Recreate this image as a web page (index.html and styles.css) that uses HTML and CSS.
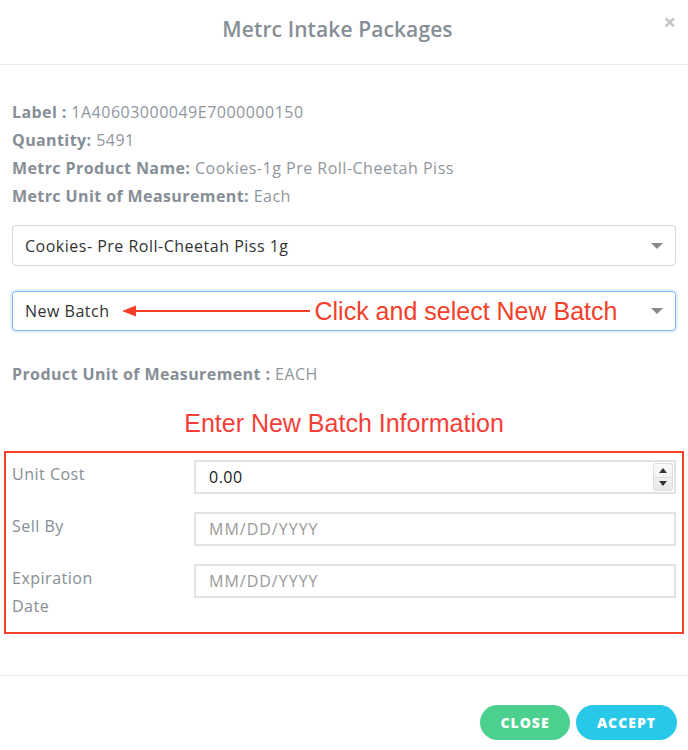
FILE: index.html
```html
<!DOCTYPE html>
<html>
<head>
<meta charset="utf-8">
<link rel="stylesheet" href="styles.css">
</head>
<body>
<div class="modal">
  <div class="modal-header">
    <h2 class="title">Metrc Intake Packages</h2>
    <span class="close-x">×</span>
  </div>
  <div class="modal-body">
    <div class="info">
      <div class="line"><b>Label :</b> 1A40603000049E7000000150</div>
      <div class="line"><b>Quantity:</b> 5491</div>
      <div class="line"><b>Metrc Product Name:</b> Cookies-1g Pre Roll-Cheetah Piss</div>
      <div class="line"><b>Metrc Unit of Measurement:</b> Each</div>
    </div>
    <div class="select">
      <span>Cookies- Pre Roll-Cheetah Piss 1g</span>
      <span class="caret"></span>
    </div>
    <div class="select focused">
      <span>New Batch</span>
      <span class="annot">
        <svg class="arrow" width="188" height="12" viewBox="0 0 188 12"><line x1="8" y1="6" x2="188" y2="6" stroke="#f4402a" stroke-width="2.2"/><polygon points="0,6 14,0.5 14,11.5" fill="#f4402a"/></svg>
        <span class="annot-text">Click and select New Batch</span>
      </span>
      <span class="caret"></span>
    </div>
    <div class="line unit"><b>Product Unit of Measurement :</b> EACH</div>
    <div class="enter">Enter New Batch Information</div>
    <div class="redbox">
      <div class="row">
        <label>Unit Cost</label>
        <div class="input num"><span class="val">0.00</span>
          <span class="spin"><span class="up"></span><span class="dn"></span></span>
        </div>
      </div>
      <div class="row">
        <label>Sell By</label>
        <div class="input"><span class="ph">MM/DD/YYYY</span></div>
      </div>
      <div class="row">
        <label>Expiration<br>Date</label>
        <div class="input"><span class="ph">MM/DD/YYYY</span></div>
      </div>
    </div>
  </div>
  <div class="modal-footer">
    <button class="btn btn-close">CLOSE</button>
    <button class="btn btn-accept">ACCEPT</button>
  </div>
</div>
</body>
</html>
```

FILE: styles.css
```css
* { box-sizing: border-box; }
html, body { margin: 0; padding: 0; background: #fff; }
body { width: 688px; height: 750px; overflow: hidden; font-family: "Open Sans", "Noto Sans", sans-serif; color: #868e96; }

.modal { width: 688px; }
.modal-header { height: 65px; border-bottom: 1px solid #e9ecef; display: flex; align-items: center; justify-content: center; position: relative; padding-right: 13px; }
.title { margin: 0; font-size: 21px; font-weight: 600; color: #868e96; letter-spacing: 0.1px; padding-bottom: 7px; }
.close-x { position: absolute; right: 12px; top: 6px; font-size: 22px; color: #c4c4c4; font-weight: 700; }

.modal-body { padding: 33px 12px 0 12px; }
.line { font-size: 16px; letter-spacing: 0.5px; line-height: 28px; color: #8f969c; white-space: nowrap; }
.line b { font-weight: 700; color: #868e96; letter-spacing: 0.4px; }
.info { margin-bottom: 15px; }

.select { height: 41px; border: 1px solid #d3d6d8; border-radius: 4px; display: flex; align-items: center; padding: 0 12px; font-size: 16px; letter-spacing: 0.5px; color: #333; position: relative; margin-bottom: 25px; }
.select.focused { border-color: #7fb6f0; box-shadow: 0 0 0 2px #e6f1fd; margin-bottom: 29px; height: 40px; }
.caret { position: absolute; right: 12px; top: 50%; margin-top: -3px; width: 0; height: 0; border-left: 6px solid transparent; border-right: 6px solid transparent; border-top: 6px solid #888; }
.annot { display: flex; align-items: center; margin-left: 12px; letter-spacing: 0; }
.arrow { display: block; }
.annot-text { font-family: "Liberation Sans", Arial, sans-serif; font-size: 25px; color: #f4402a; margin-left: 5px; }

.unit { margin-bottom: 21px; }
.enter { text-align: center; font-family: "Liberation Sans", Arial, sans-serif; font-size: 25px; color: #f63e38; line-height: 28px; margin-bottom: 14px; }

.redbox { margin: 0 -8px; border: 2px solid #f8412a; padding: 7px 6px 12px 6px; display: flex; flex-direction: column; gap: 18px; }
.row { display: flex; align-items: flex-start; }
.row label { width: 182px; font-size: 16px; letter-spacing: 0.5px; line-height: 28px; color: #868e96; flex-shrink: 0; }
.input { flex: 1; height: 34px; border: 2px solid #e2e2e2; display: flex; align-items: center; padding: 0 13px; font-size: 16px; letter-spacing: 0.5px; position: relative; }
.val { color: #222; }
.ph { color: #9a9a9a; letter-spacing: 1px; }
.spin { position: absolute; right: 1px; top: 1px; bottom: 1px; width: 20px; border: 1px solid #ddd; border-radius: 3px; background: linear-gradient(#fafafa, #e8e8e8); display: flex; flex-direction: column; }
.spin .up, .spin .dn { flex: 1; display: flex; align-items: center; justify-content: center; }
.spin .up::after { content: ""; border-left: 4px solid transparent; border-right: 4px solid transparent; border-bottom: 5px solid #333; }
.spin .dn::after { content: ""; border-left: 4px solid transparent; border-right: 4px solid transparent; border-top: 5px solid #333; }
.spin .up { border-bottom: 1px solid #ddd; }

.modal-footer { margin-top: 41px; border-top: 1px solid #e9ecef; display: flex; justify-content: flex-end; gap: 6px; padding: 29px 11px 0 0; }
.btn { border: none; height: 35px; border-radius: 18px; color: #fff; font-family: "Open Sans", sans-serif; font-weight: 800; font-size: 14px; letter-spacing: 1px; padding: 0; }
.btn-close { width: 90px; background: #4bd08f; }
.btn-accept { width: 101px; background: #27c8e8; }
```
